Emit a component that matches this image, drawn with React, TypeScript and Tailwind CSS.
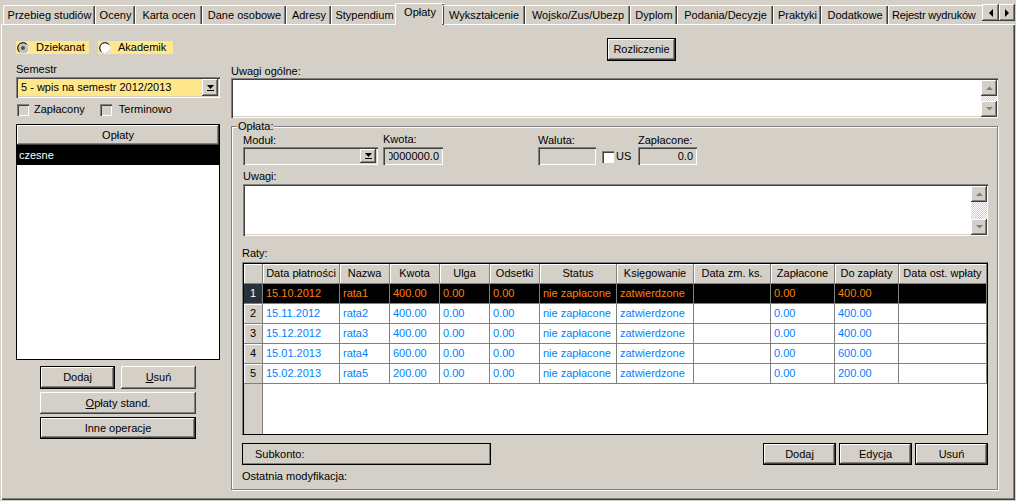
import React from 'react';

const raised =
  'bg-[#d4d0c8] shadow-[inset_-1px_-1px_0_#404040,inset_1px_1px_0_#ffffff,inset_-2px_-2px_0_#808080]';
const sunken =
  'shadow-[inset_1px_1px_0_#808080,inset_2px_2px_0_#404040,inset_-1px_-1px_0_#ffffff,inset_-2px_-2px_0_#d4d0c8]';

const tabs = [
  { label: 'Przebieg studiów', w: 'w-[92px]' },
  { label: 'Oceny', w: 'w-[40px]' },
  { label: 'Karta ocen', w: 'w-[67px]' },
  { label: 'Dane osobowe', w: 'w-[84px]' },
  { label: 'Adresy', w: 'w-[45px]' },
  { label: 'Stypendium', w: 'w-[66px]' },
  { label: 'Opłaty', w: 'w-[49px]', active: true },
  { label: 'Wykształcenie', w: 'w-[83px]' },
  { label: 'Wojsko/Zus/Ubezp', w: 'w-[105px]' },
  { label: 'Dyplom', w: 'w-[47px]' },
  { label: 'Podania/Decyzje', w: 'w-[96px]' },
  { label: 'Praktyki', w: 'w-[48px]' },
  { label: 'Dodatkowe', w: 'w-[67px]' },
  { label: 'Rejestr wydruków', w: 'w-[94px]', last: true },
];

const columns = [
  'Data płatności',
  'Nazwa',
  'Kwota',
  'Ulga',
  'Odsetki',
  'Status',
  'Księgowanie',
  'Data zm. ks.',
  'Zapłacone',
  'Do zapłaty',
  'Data ost. wpłaty',
];

const raty = [
  ['15.10.2012', 'rata1', '400.00', '0.00', '0.00', 'nie zapłacone', 'zatwierdzone', '', '0.00', '400.00', ''],
  ['15.11.2012', 'rata2', '400.00', '0.00', '0.00', 'nie zapłacone', 'zatwierdzone', '', '0.00', '400.00', ''],
  ['15.12.2012', 'rata3', '400.00', '0.00', '0.00', 'nie zapłacone', 'zatwierdzone', '', '0.00', '400.00', ''],
  ['15.01.2013', 'rata4', '600.00', '0.00', '0.00', 'nie zapłacone', 'zatwierdzone', '', '0.00', '600.00', ''],
  ['15.02.2013', 'rata5', '200.00', '0.00', '0.00', 'nie zapłacone', 'zatwierdzone', '', '0.00', '200.00', ''],
];

const gridCols =
  'grid grid-cols-[19px_77px_50px_50px_50px_50px_77px_77px_77px_64px_64px_88px]';

const Btn = ({
  children,
  def,
  className = '',
}: {
  children: React.ReactNode;
  def?: boolean;
  className?: string;
}) => (
  <div
    className={`flex items-center justify-center whitespace-nowrap ${raised} ${
      def ? 'border border-black' : ''
    } ${className}`}
  >
    {children}
  </div>
);

const DropGlyph = () => (
  <svg width="9" height="8" viewBox="0 0 9 8">
    <polygon points="1,1 8,1 4.5,5" fill="#000" />
    <rect x="1" y="6" width="7" height="1" fill="#000" />
  </svg>
);

const ScrollBtn = ({ up }: { up?: boolean }) => (
  <div className={`w-[16px] h-[16px] flex items-center justify-center ${raised}`}>
    <svg width="9" height="6" viewBox="0 0 9 6">
      {up ? (
        <polygon points="1,5 8,5 4.5,1.5" fill="#808080" />
      ) : (
        <polygon points="1,1 8,1 4.5,4.5" fill="#808080" />
      )}
    </svg>
  </div>
);

const VScroll = () => (
  <div className="w-[16px] h-full flex flex-col">
    <ScrollBtn up />
    <div className="flex-1 bg-[repeating-conic-gradient(#ffffff_0_25%,#d4d0c8_0_50%)] bg-[length:2px_2px]" />
    <ScrollBtn />
  </div>
);

const Memo = ({ className }: { className: string }) => (
  <div className={`bg-white flex justify-end pt-[2px] pb-[1px] pr-[1px] ${sunken} ${className}`}>
    <VScroll />
  </div>
);

const Check = ({ white }: { white?: boolean }) => (
  <div
    className={`w-[12px] h-[12px] shrink-0 ${white ? 'bg-white' : 'bg-[#d4d0c8]'} shadow-[inset_1px_1px_0_#808080,inset_2px_2px_0_#404040,inset_-1px_-1px_0_#ffffff]`}
  />
);

const Radio = ({ checked }: { checked?: boolean }) => (
  <svg width="12" height="12" viewBox="0 0 12 12" className="shrink-0">
    <circle cx="6" cy="6" r="5.5" fill={checked ? '#c8c4bc' : '#ffffff'} stroke="#808080" />
    <path d="M2.3 9.7 A5 5 0 0 1 9.7 2.3" fill="none" stroke="#202020" strokeWidth="1" />
    <path d="M10.2 3 A5 5 0 0 1 3 10.2" fill="none" stroke="#ffffff" strokeWidth="1" />
    {checked && <circle cx="6" cy="6" r="2" fill="#505050" />}
  </svg>
);

const Label = ({ children, className = '' }: { children: React.ReactNode; className?: string }) => (
  <div className={`h-[13px] whitespace-nowrap ${className}`}>{children}</div>
);

export default function App() {
  return (
    <div className="w-[1016px] h-[501px] bg-[#d4d0c8] overflow-hidden font-['Liberation_Sans',Arial,sans-serif] text-[11px] leading-[13px] text-black select-none">
      {/* zakładki */}
      <div className="relative z-10 h-[24px] flex items-end pl-[3px]">
        {tabs.map((t) =>
          t.active ? (
            <div
              key={t.label}
              className={`${t.w} -mx-[2px] mb-[-1px] h-[22px] bg-[#d4d0c8] border-t border-l border-white rounded-tl-[2px] shadow-[inset_-1px_0_0_#404040,inset_-2px_0_0_#808080] flex items-start justify-center pt-[2px]`}
            >
              {t.label}
            </div>
          ) : (
            <div
              key={t.label}
              className={`${t.w} h-[19px] border-t border-l border-white rounded-tl-[2px] flex items-center whitespace-nowrap overflow-hidden ${
                t.last
                  ? 'justify-start pl-[3px] tracking-[-0.2px]'
                  : 'justify-center shadow-[inset_-1px_0_0_#404040,inset_-2px_0_0_#808080]'
              }`}
            >
              {t.label}
            </div>
          )
        )}
        <div className="flex mb-[3px]">
          <div className={`w-[17px] h-[17px] flex items-center justify-center ${raised}`}>
            <svg width="6" height="8" viewBox="0 0 6 8">
              <polygon points="5,0 5,8 1,4" fill="#000" />
            </svg>
          </div>
          <div className={`w-[16px] h-[17px] flex items-center justify-center ${raised}`}>
            <svg width="6" height="8" viewBox="0 0 6 8">
              <polygon points="1,0 1,8 5,4" fill="#000" />
            </svg>
          </div>
        </div>
      </div>

      {/* strona */}
      <div className="ml-[1px] w-[1014px] h-[476px] border-t border-l border-white shadow-[inset_-1px_-1px_0_#404040,inset_-2px_-2px_0_#808080] flex">
        {/* lewa kolumna */}
        <div className="ml-[14px] w-[204px] flex flex-col">
          <div className="mt-[16px] h-[13px] flex gap-[9px]">
            <div className="w-[73px] bg-[#ffe88c] flex items-center gap-[7px] pl-[1px]">
              <Radio checked />
              <span>Dziekanat</span>
            </div>
            <div className="w-[75px] bg-[#ffe88c] flex items-center gap-[7px] pl-[1px]">
              <Radio />
              <span>Akademik</span>
            </div>
          </div>
          <Label className="mt-[9px]">Semestr</Label>
          <div className={`mt-[1px] h-[21px] bg-[#ffe88c] flex items-center ${sunken}`}>
            <span className="flex-1 pl-[5px] whitespace-nowrap">5 - wpis na semestr 2012/2013</span>
            <div className={`w-[16px] h-[17px] mr-[2px] flex items-center justify-center ${raised}`}>
              <DropGlyph />
            </div>
          </div>
          <div className="mt-[5px] h-[13px] flex items-center">
            <div className="ml-[1px]">
              <Check />
            </div>
            <span className="ml-[5px]">Zapłacony</span>
            <div className="ml-[15px]">
              <Check />
            </div>
            <span className="ml-[7px]">Terminowo</span>
          </div>
          <div className="mt-[8px] h-[236px] border border-black bg-white flex flex-col">
            <div className={`h-[20px] flex items-center justify-center ${raised}`}>Opłaty</div>
            <div className="h-[20px] bg-black text-white flex items-center pl-[2px]">czesne</div>
          </div>
          <div className="mt-[6px] ml-[24px] flex gap-[6px]">
            <Btn def className="w-[75px] h-[23px]">
              Dodaj
            </Btn>
            <Btn className="w-[75px] h-[23px]">
              <span>
                <u>U</u>suń
              </span>
            </Btn>
          </div>
          <Btn className="mt-[3px] ml-[24px] w-[156px] h-[22px]">
            <span>
              <u>O</u>płaty stand.
            </span>
          </Btn>
          <Btn def className="mt-[3px] ml-[24px] w-[156px] h-[22px]">
            Inne operacje
          </Btn>
        </div>

        {/* prawa kolumna */}
        <div className="ml-[11px] w-[767px] flex flex-col">
          <Btn def className="mt-[13px] ml-[376px] w-[69px] h-[23px]">
            Rozliczenie
          </Btn>
          <Label className="mt-[4px]">Uwagi ogólne:</Label>
          <Memo className="h-[40px] w-[767px]" />

          <div className="relative mt-[8px] h-[364px] border border-[#808080] shadow-[inset_1px_1px_0_#ffffff,1px_1px_0_#ffffff] flex flex-col">
            <div className="absolute left-[5px] -top-[7px] px-[1px] bg-[#d4d0c8]">Opłata:</div>

            <div className="mt-[7px] ml-[11px] flex">
              <div className="w-[135px] flex flex-col">
                <Label>Moduł:</Label>
                <div className={`h-[18px] flex items-center justify-end ${sunken}`}>
                  <div className={`w-[16px] h-[14px] mr-[2px] flex items-center justify-center ${raised}`}>
                    <DropGlyph />
                  </div>
                </div>
              </div>
              <div className="ml-[5px] w-[60px] flex flex-col">
                <Label className="-mt-[1px] mb-[1px]">Kwota:</Label>
                <div className={`h-[18px] flex items-center justify-end pr-[4px] ${sunken}`}>
                  <div className="w-[50px] overflow-hidden flex justify-end">
                    <span className="whitespace-nowrap">0000000.0</span>
                  </div>
                </div>
              </div>
              <div className="ml-[95px] w-[58px] flex flex-col">
                <Label>Waluta:</Label>
                <div className={`h-[18px] ${sunken}`} />
              </div>
              <div className="w-[42px] flex items-end pb-[2px] pl-[6px]">
                <Check white />
                <span className="ml-[2px] leading-[13px]">US</span>
              </div>
              <div className="w-[59px] flex flex-col">
                <Label>Zapłacone:</Label>
                <div className={`h-[18px] flex items-center justify-end pr-[4px] ${sunken}`}>0.0</div>
              </div>
            </div>

            <Label className="mt-[5px] ml-[11px]">Uwagi:</Label>
            <Memo className="mt-[1px] ml-[11px] h-[52px] w-[745px]" />

            <Label className="mt-[11px] ml-[10px]">Raty:</Label>

            <div className="mt-[2px] ml-[10px] w-[746px] h-[173px] border-t border-l border-t-[#808080] border-l-[#808080] border-r border-b border-r-black border-b-black">
              <div className="h-full border-t border-l border-black bg-white flex flex-col">
                <div className={`${gridCols} h-[20px] shrink-0`}>
                  <div className="bg-[#d4d0c8] border-r border-b border-[#808080] shadow-[inset_1px_1px_0_#ffffff]" />
                  {columns.map((c) => (
                    <div
                      key={c}
                      className="bg-[#d4d0c8] border-r border-b border-[#808080] shadow-[inset_1px_1px_0_#ffffff] flex items-center justify-center whitespace-nowrap overflow-hidden"
                    >
                      {c}
                    </div>
                  ))}
                </div>
                {raty.map((r, i) => {
                  const sel = i === 0;
                  return (
                    <div key={i} className={`${gridCols} h-[20px] shrink-0`}>
                      <div
                        className={`border-r border-b border-[#808080] flex items-center justify-center ${
                          sel
                            ? 'bg-[#283038] text-white'
                            : 'bg-[#d4d0c8] shadow-[inset_1px_1px_0_#ffffff]'
                        }`}
                      >
                        {i + 1}
                      </div>
                      {r.map((v, j) => (
                        <div
                          key={j}
                          className={`border-r border-b border-[#808080] flex items-center pl-[3px] whitespace-nowrap overflow-hidden ${
                            sel ? 'bg-black text-[#ff8000]' : 'bg-white text-[#0080ff]'
                          }`}
                        >
                          {v}
                        </div>
                      ))}
                    </div>
                  );
                })}
                <div className="flex-1 flex">
                  <div className="w-[19px] bg-[#d4d0c8] border-r border-[#808080]" />
                  <div className="flex-1 bg-white" />
                </div>
              </div>
            </div>

            <div className="mt-[8px] ml-[10px] w-[746px] h-[22px] flex justify-between">
              <div className="w-[249px] h-[22px] border border-black shadow-[inset_-1px_-1px_0_#808080] flex items-center pl-[12px]">
                Subkonto:
              </div>
              <div className="flex gap-[3px]">
                <Btn def className="w-[73px] h-[22px]">
                  Dodaj
                </Btn>
                <Btn def className="w-[73px] h-[22px]">
                  Edycja
                </Btn>
                <Btn def className="w-[73px] h-[22px]">
                  Usuń
                </Btn>
              </div>
            </div>
            <Label className="mt-[5px] ml-[10px]">Ostatnia modyfikacja:</Label>
          </div>
        </div>
      </div>
    </div>
  );
}
